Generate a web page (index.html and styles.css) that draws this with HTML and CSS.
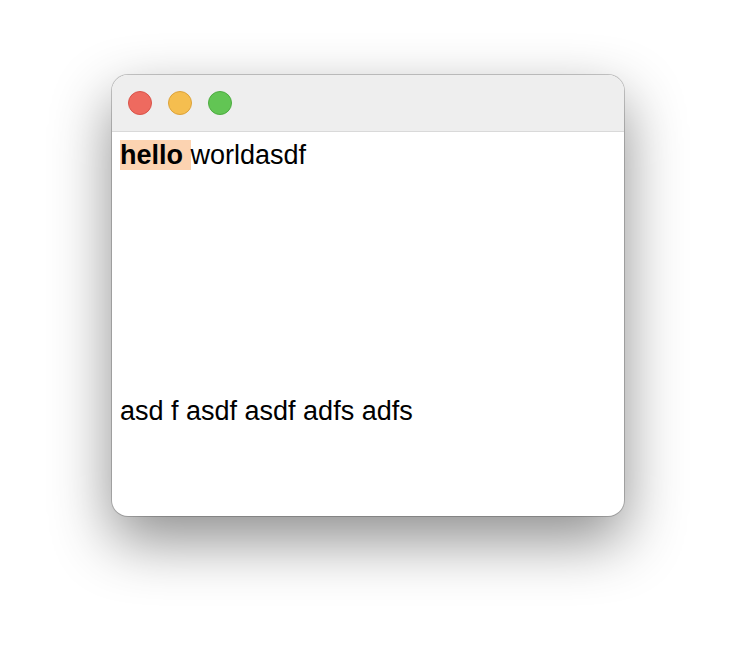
FILE: index.html
```html
<!DOCTYPE html>
<html lang="en">
    <head>
        <meta charset="utf-8"/>
        <title>Window</title>
        <link rel="stylesheet" href="styles.css">
    </head>
    <body>
        <!-- Window -->
        <div class="window">
            <div class="titlebar">
                <span class="light red"></span>
                <span class="light yellow"></span>
                <span class="light green"></span>
            </div>
            <div class="content">
                <p class="line"><b class="mark">hello </b>worldasdf</p>
                <p class="line lower">asd f asdf asdf adfs adfs</p>
            </div>
        </div>
    </body>
</html>
```

FILE: styles.css
```css
html {
    background-color: #ffffff;
}

body {
    margin: 0;
    min-height: 100vh;
    box-sizing: border-box;
    display: flex;
    justify-content: center;
    align-items: flex-start;
    padding-top: 75px;
    font-family: "Liberation Sans", Arial, sans-serif;
}

.window {
    width: 512px;
    height: 441px;
    box-sizing: border-box;
    border-radius: 16px;
    background-color: #ffffff;
    overflow: hidden;
    box-shadow: 0 0 0 1px rgba(0, 0, 0, 0.2), 0 24px 60px 0 rgba(0, 0, 0, 0.45);
}

.titlebar {
    height: 57px;
    background-color: #eeeeee;
    border-bottom: 1px solid #d9d9d9;
    display: flex;
    align-items: center;
    gap: 16px;
    padding-left: 16px;
    box-sizing: border-box;
}

.light {
    width: 24px;
    height: 24px;
    border-radius: 50%;
    box-sizing: border-box;
}

.red {
    background-color: #ee6a5f;
    border: 1px solid #d9534a;
}

.yellow {
    background-color: #f5be4f;
    border: 1px solid #dca23a;
}

.green {
    background-color: #62c554;
    border: 1px solid #4dab40;
}

.content {
    padding: 8px;
    color: #000000;
    font-size: 27px;
}

.line {
    margin: 0;
    line-height: 31px;
}

.mark {
    background-color: #fcd3b1;
}

.lower {
    margin-top: 225px;
}
```
